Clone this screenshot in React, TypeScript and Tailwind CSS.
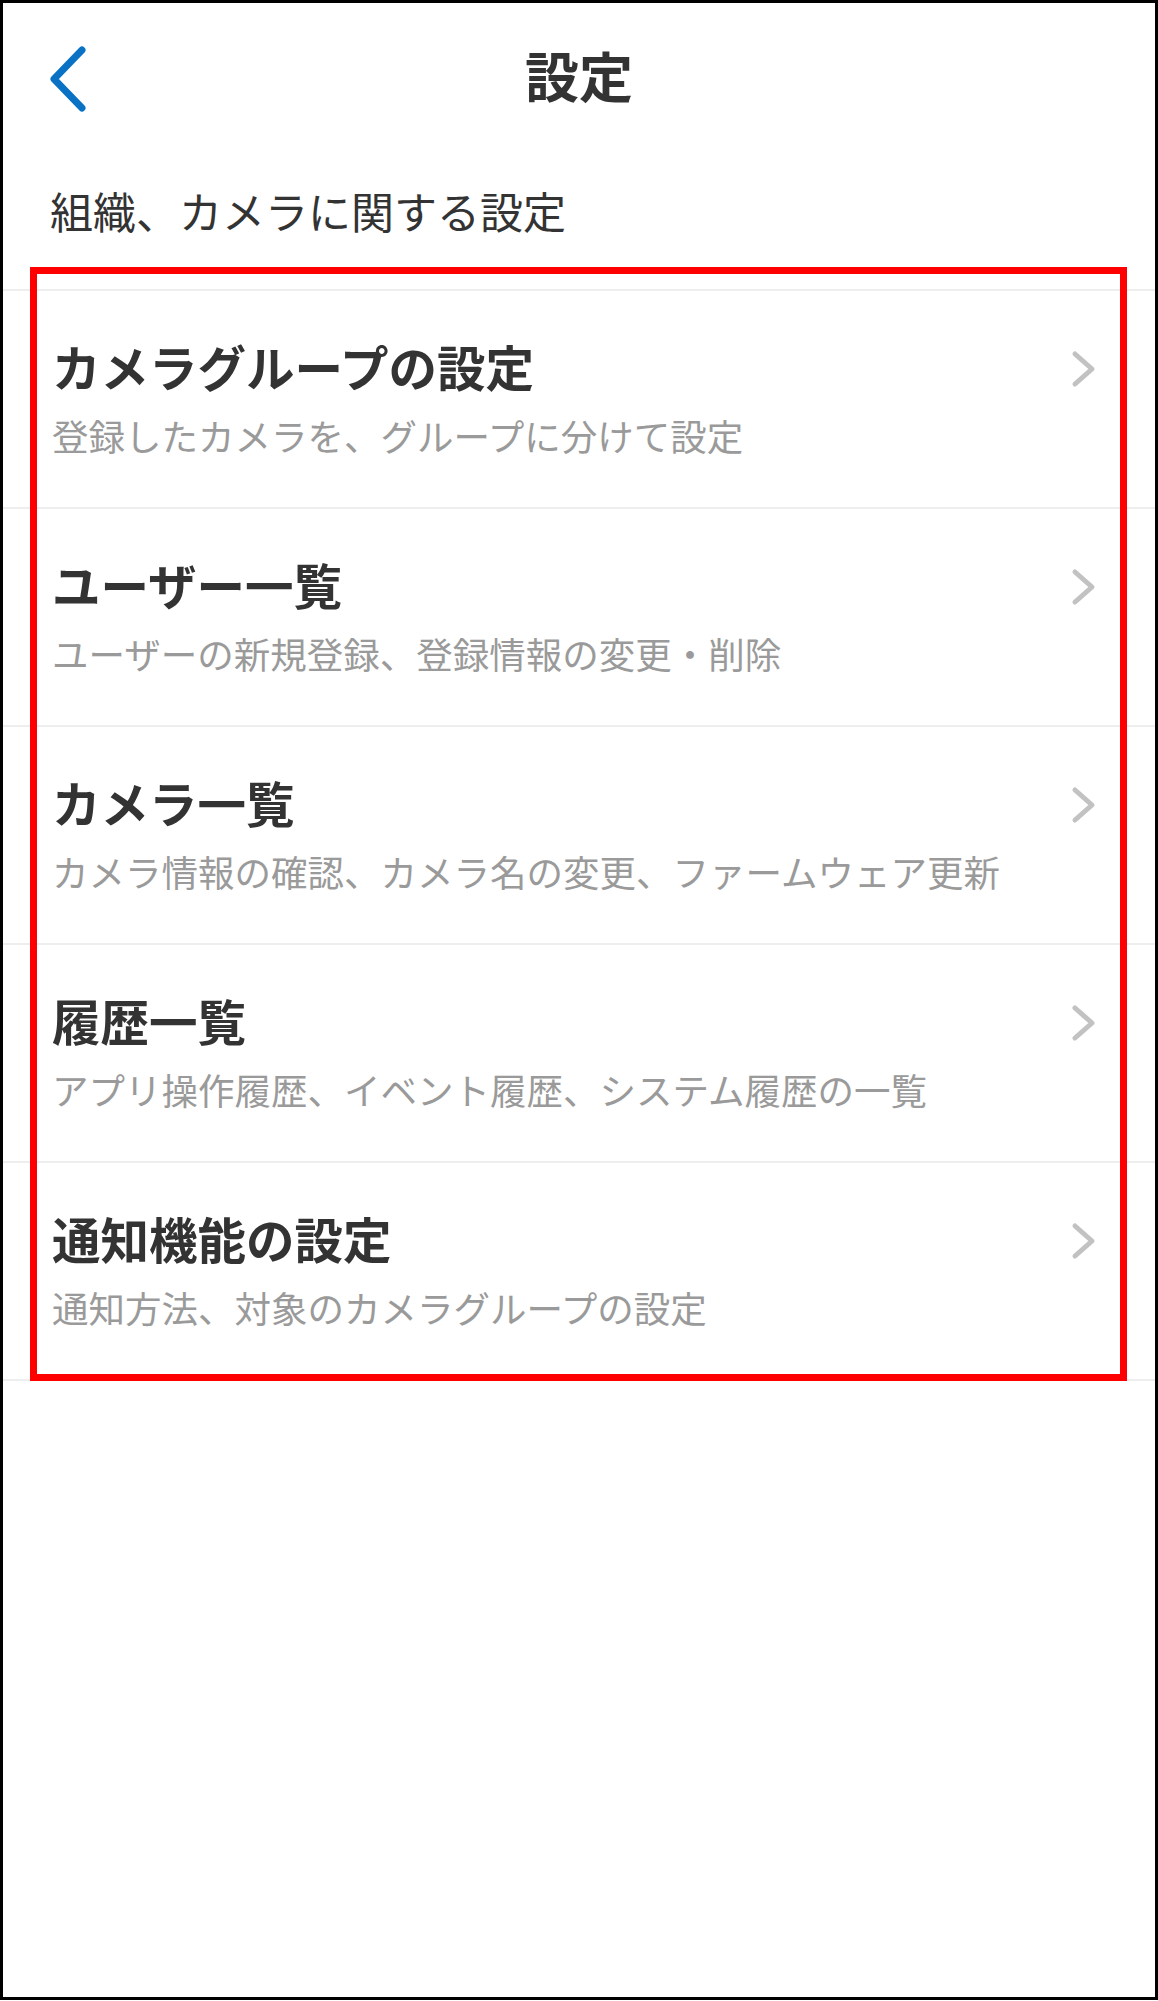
import React from 'react'

const ITEMS = [
  { title: 'カメラグループの設定', sub: '登録したカメラを、グループに分けて設定' },
  { title: 'ユーザー一覧', sub: 'ユーザーの新規登録、登録情報の変更・削除' },
  { title: 'カメラ一覧', sub: 'カメラ情報の確認、カメラ名の変更、ファームウェア更新' },
  { title: '履歴一覧', sub: 'アプリ操作履歴、イベント履歴、システム履歴の一覧' },
  { title: '通知機能の設定', sub: '通知方法、対象のカメラグループの設定' },
]

const FONT = { fontFamily: '"Noto Sans CJK JP", "Noto Sans", sans-serif' }

function BackChevron() {
  return (
    <svg width="40" height="66" viewBox="0 0 40 66" fill="none">
      <polyline
        points="35,4 7,33 35,62"
        stroke="#0a72c4"
        strokeWidth="7"
        strokeLinecap="round"
        strokeLinejoin="round"
      />
    </svg>
  )
}

function RowChevron() {
  return (
    <svg width="26" height="38" viewBox="0 0 26 38" fill="none">
      <polyline
        points="4,4 21,19 4,34"
        stroke="#c2c2c2"
        strokeWidth="5"
        strokeLinecap="round"
        strokeLinejoin="round"
      />
    </svg>
  )
}

export default function App() {
  return (
    <div className="w-[1158px] h-[2001px] bg-white" style={FONT}>
      <div className="relative h-[2000px] border-[3px] border-black bg-white">
        {/* header */}
        <div className="relative flex h-[144px] items-center justify-center">
          <div className="absolute left-[44px] top-[43px]">
            <BackChevron />
          </div>
          <h1 className="text-[54px] font-bold leading-none text-[#333333]">設定</h1>
        </div>

        <div className="h-[142px] pl-[47px] pt-[42px]">
          <p className="text-[43px] leading-none text-[#333333]">組織、カメラに関する設定</p>
        </div>

        <ul className="border-t-2 border-[#eeeeee]">
          {ITEMS.map((item) => (
            <li key={item.title} className="flex h-[218px] border-b-2 border-[#eeeeee] pl-[49px] pr-[58px]">
              <div className="flex-1 pt-[51px]">
                <p className="text-[48.5px] font-bold leading-none text-[#333333]">{item.title}</p>
                <p className="mt-[27px] text-[36.5px] leading-none text-[#9a9a9a]">{item.sub}</p>
              </div>
              <div className="pt-[59px]">
                <RowChevron />
              </div>
            </li>
          ))}
        </ul>

        {/* annotation frame */}
        <div className="absolute left-[27px] top-[264px] h-[1114px] w-[1097px] border-[7px] border-[#ff0000]" />
      </div>
    </div>
  )
}
